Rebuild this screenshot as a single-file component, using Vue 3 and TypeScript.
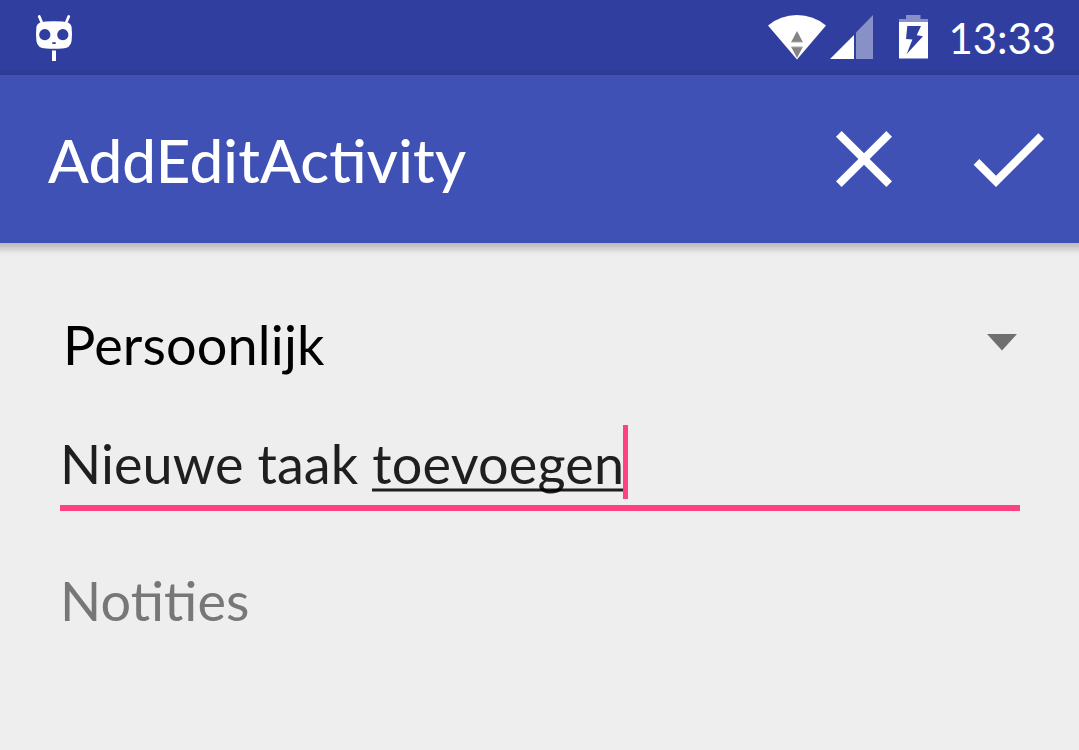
<script setup lang="ts">
const time = '13:33'
const title = 'AddEditActivity'
const category = 'Persoonlijk'
const committed = 'Nieuwe taak '
const composing = 'toevoegen'
const notesHint = 'Notities'
</script>

<template>
  <main class="screen">
    <header class="status">
      <svg class="mascot" viewBox="0 0 40 50" width="40" height="50">
        <path d="M5.2 4.4L8 11M34.8 4.4L32 11" stroke="#fff" stroke-width="2.7" stroke-linecap="round" />
        <path
          fill="#fff"
          fill-rule="evenodd"
          d="M12 9.6Q20 9 28 9.6Q37 10 37.6 15Q38.4 22 37.6 29Q36.5 36.4 28 36.6Q20 37 12 36.6Q3.5 36.4 2.4 29Q1.6 22 2.4 15Q3 10 12 9.6zM10.8 17.1a5.6 5.6 0 1 0 .01 0zM28.8 17.1a5.6 5.6 0 1 0 .01 0zM18.1 30.2v1.2q1.9 1.4 3.8 0v-1.2z"
        />
        <path fill="#fff" d="M18 38.5h4V49h-4z" />
      </svg>
      <div class="indicators">
        <svg class="wifi" viewBox="0 0 58 46" width="58" height="46">
          <path fill="#fff" d="M0 11.5Q12.5 1 29 1T58 11.5L29 45.5z" />
          <path fill="#848484" d="M29 17l5.8 11H23.2zM23.2 33h11.6L29 44z" />
          <path fill="#c9c9c9" d="M23.2 27.7h11.6v1.1H23.2zM23.2 32.2h11.6v1H23.2z" />
        </svg>
        <svg class="signal" viewBox="0 0 44 46" width="44" height="46">
          <path fill="#fff" d="M0 45L24 21V45z" />
          <path fill="#8790c7" d="M26 18.5L43 1V45H26z" />
        </svg>
        <svg class="battery" viewBox="0 0 29 46" width="29" height="46">
          <path fill="#8790c7" d="M7 1h14.5v4H29v3H0V5h7z" />
          <path fill="#fff" d="M0 8h29v36.6H0z" />
          <path fill="#303f9f" d="M8.3 12H22l-4.3 9.3 6.3 1L7.7 40l5.7-14.4-6.4-.6z" />
        </svg>
        <time class="clock">{{ time }}</time>
      </div>
    </header>

    <nav class="toolbar">
      <h1 class="title">{{ title }}</h1>
      <button class="action" type="button" aria-label="Annuleren">
        <svg viewBox="0 0 24 24" width="96" height="96">
          <path fill="#fff" d="M19 6.41L17.59 5 12 10.59 6.41 5 5 6.41 10.59 12 5 17.59 6.41 19 12 13.41 17.59 19 19 17.59 13.41 12z" />
        </svg>
      </button>
      <button class="action" type="button" aria-label="Opslaan">
        <svg viewBox="0 0 24 24" width="96" height="96">
          <path fill="#fff" d="M9 16.17L4.83 12l-1.42 1.41L9 19 21 7l-1.41-1.41z" />
        </svg>
      </button>
    </nav>

    <section class="form">
      <div class="spinner">
        <span>{{ category }}</span>
        <svg class="arrow" viewBox="0 0 30 17" width="30" height="17">
          <path fill="#6f6f6f" d="M0 0h30L15 16.5z" />
        </svg>
      </div>
      <div class="task">
        <span class="committed">{{ committed }}</span>
        <span class="composing">{{ composing }}</span>
        <i class="caret"></i>
      </div>
      <div class="notes">{{ notesHint }}</div>
    </section>
  </main>
</template>

<style>
html,
body {
  margin: 0;
  background: #eeeeee;
}
</style>

<style scoped>
.screen {
  height: 750px;
  overflow: hidden;
  background: #eeeeee;
  font-family: Lato, sans-serif;
  font-feature-settings: 'liga' 1;
}
.status {
  box-sizing: border-box;
  height: 75px;
  padding: 0 22px 0 34px;
  display: flex;
  justify-content: space-between;
  align-items: flex-start;
  background: linear-gradient(to bottom, #303f9f 69px, #2b3990 75px);
}
.mascot {
  margin-top: 12px;
}
.indicators {
  display: flex;
  align-items: flex-start;
}
.indicators svg {
  margin-top: 14px;
}
.signal {
  margin-left: 4px;
}
.battery {
  margin-left: 25px;
}
.clock {
  margin-left: 20.5px;
  margin-right: 1px;
  font-size: 42px;
  line-height: 76px;
  letter-spacing: -0.1px;
  color: #fff;
}
.toolbar {
  box-sizing: border-box;
  height: 168px;
  padding: 0 23px 0 48px;
  display: flex;
  align-items: center;
  background: #3f51b5;
}
.title {
  flex: 1;
  margin: 0;
  padding-top: 2px;
  font-size: 60px;
  font-weight: 500;
  line-height: 72px;
  letter-spacing: 0.2px;
  color: #fff;
}
.action {
  width: 96px;
  height: 96px;
  padding: 0;
  border: 0;
  background: none;
}
.action + .action {
  margin-left: 48px;
}
.action svg {
  display: block;
}
.form {
  padding: 65px 59px 0 60px;
  font-size: 54px;
  background: linear-gradient(to bottom, #bcbcbc, #c5c5c5 3px, #dadada 7px, #e9e9e9 10px, #eeeeee 14px);
}
.spinner {
  height: 72px;
  padding: 0 3px;
  display: flex;
  align-items: center;
  justify-content: space-between;
  letter-spacing: 0.16px;
  color: #000;
}
.arrow {
  margin-bottom: 4px;
}
.task {
  height: 74px;
  margin-top: 45px;
  padding-bottom: 6px;
  border-bottom: 6px solid #ff4081;
  display: flex;
  white-space: pre;
  line-height: 77px;
  color: rgba(0, 0, 0, 0.87);
}
.committed {
  letter-spacing: 0.1px;
}
.composing {
  letter-spacing: 0.2px;
  background: linear-gradient(
      to bottom,
      rgba(0, 0, 0, 0.44) 1px,
      rgba(0, 0, 0, 0.87) 1px 3px,
      rgba(0, 0, 0, 0.44) 3px
    )
    0 63px / 100% 4px no-repeat;
}
.caret {
  width: 5px;
  height: 74px;
  margin-left: -1px;
  background: #ff4081;
}
.notes {
  margin-top: 54px;
  line-height: 72px;
  letter-spacing: 0.1px;
  color: #777;
}
</style>
